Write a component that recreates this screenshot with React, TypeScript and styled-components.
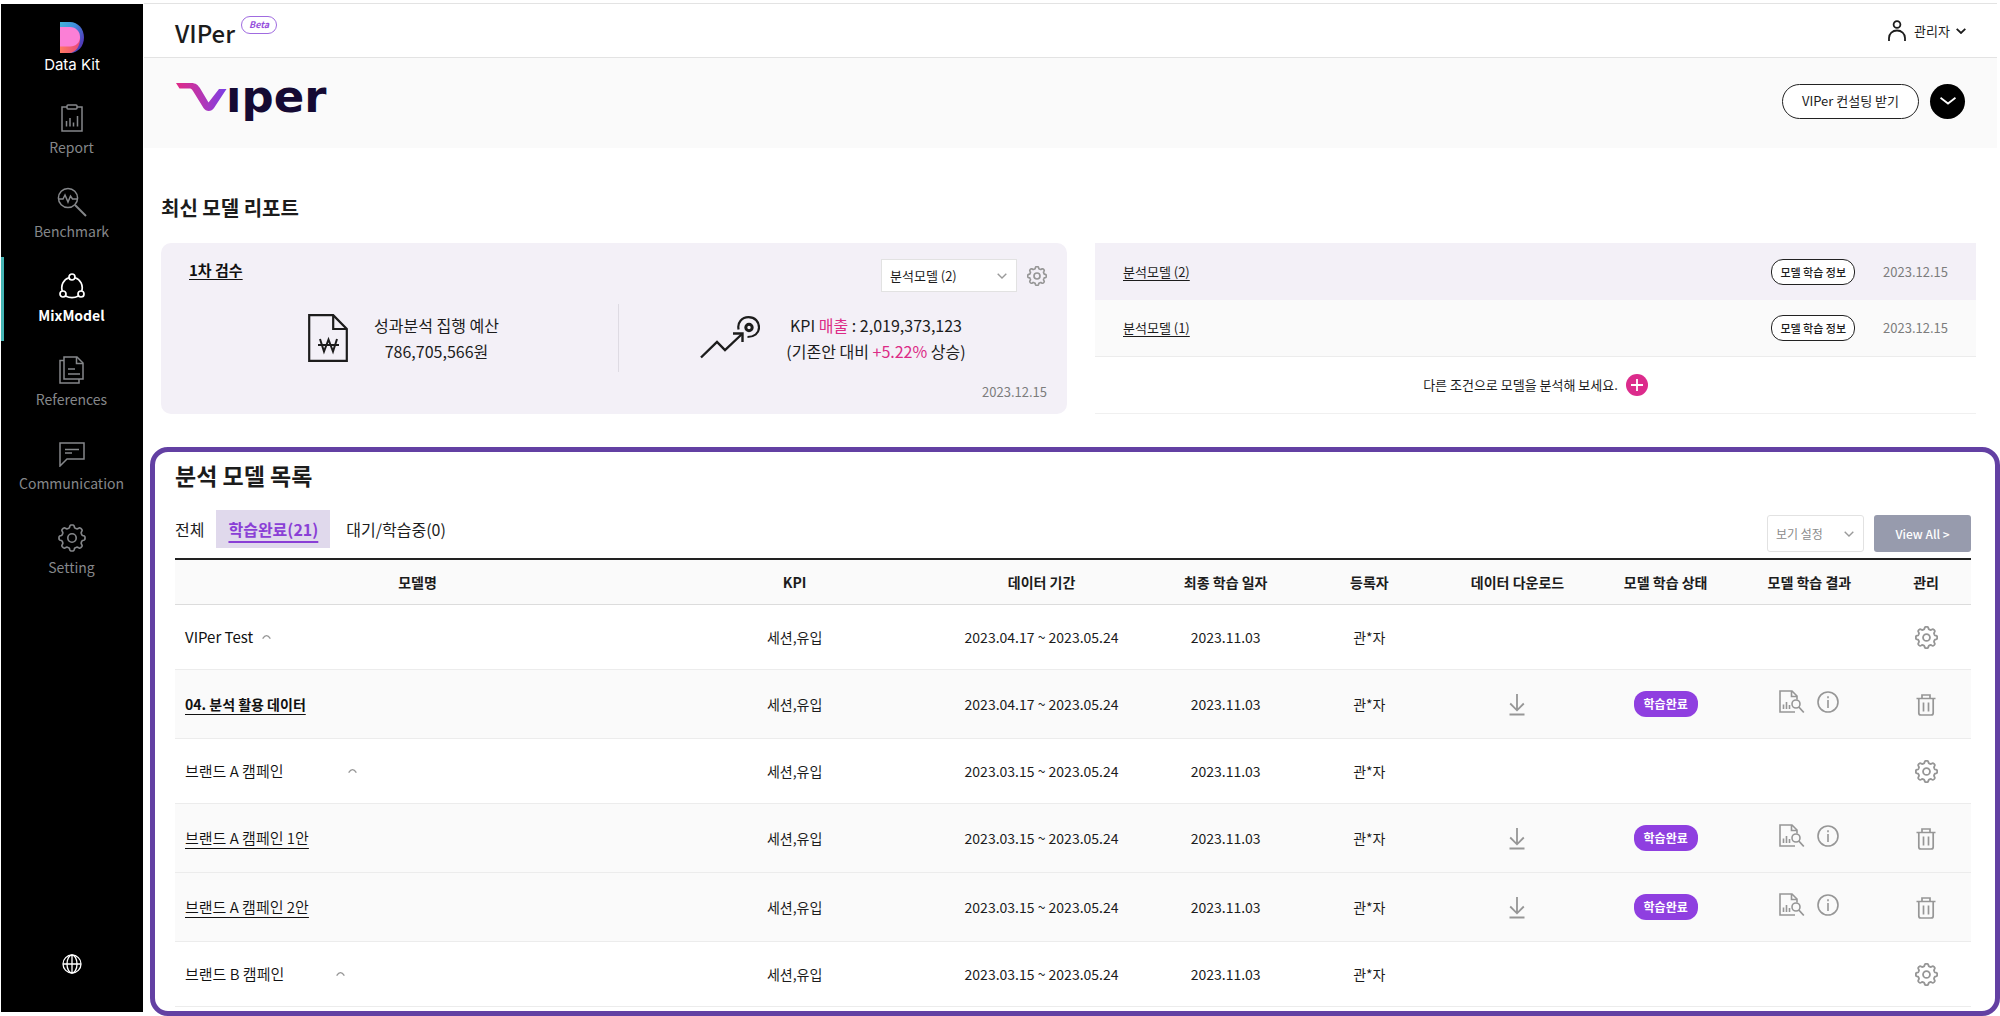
import React from "react";
import styled, { createGlobalStyle, css } from "styled-components";

const Global = createGlobalStyle`
  *, *::before, *::after { box-sizing: border-box; }
  body {
    margin: 0;
    background: #fff;
    color: #1c1c1c;
    font-family: "Noto Sans CJK KR", "Noto Sans", sans-serif;
    font-size: 14px;
    line-height: 20px;
  }
  button, select { font: inherit; color: inherit; }
  button { border: 0; padding: 0; background: none; cursor: pointer; }
  a { color: inherit; }
  svg { display: block; flex: none; }
  h1, h2, p { margin: 0; }
`;

/* ---------- icons ---------- */

const gearPath = (() => {
  const points: string[] = [];
  for (let i = 0; i < 160; i++) {
    const a = (i / 160) * Math.PI * 2;
    const r = 10 + 1.2 * Math.tanh(2.2 * Math.cos(8 * a));
    points.push(`${(12 + r * Math.sin(a)).toFixed(2)} ${(12 - r * Math.cos(a)).toFixed(2)}`);
  }
  return `M${points.join("L")}Z`;
})();

const GearIcon = ({ size = 24, stroke = 1.6 }: { size?: number; stroke?: number }) => (
  <svg width={size} height={size} viewBox="0 0 24 24" fill="none" stroke="currentColor" strokeWidth={stroke} strokeLinejoin="round">
    <path d={gearPath} />
    <circle cx="12" cy="12" r="3.6" />
  </svg>
);

const ReportIcon = () => (
  <svg width="22" height="28" viewBox="0 0 22 28" fill="none" stroke="currentColor" strokeWidth="1.5">
    <path d="M6 3H1v24h20V3h-5" />
    <rect x="6" y="1" width="10" height="4" rx="1" />
    <path d="M5.5 17v5.500M9 14v8.500M12.500 18.500v4M16.500 12v10.500" />
  </svg>
);

const BenchmarkIcon = () => (
  <svg width="30" height="30" viewBox="0 0 30 30" fill="none" stroke="currentColor" strokeWidth="1.5">
    <circle cx="11" cy="11" r="9.600" />
    <path d="M18 18l11 11" strokeWidth="2" />
    <path d="M2 12h4l2-4 3 7 2.500-6 2 3H20" />
  </svg>
);

const MixModelIcon = () => (
  <svg width="26" height="26" viewBox="0 0 26 26" fill="none" stroke="currentColor" strokeWidth="1.700">
    <circle cx="13" cy="4" r="3" />
    <circle cx="4" cy="21" r="3" />
    <circle cx="22" cy="21" r="3" />
    <path d="M10 4.800C4.500 6.500 1.500 12.500 3.300 18M16 4.800C21.500 6.500 24.500 12.500 22.700 18M6.500 23c4 2 9 2 13 0" />
  </svg>
);

const ReferencesIcon = () => (
  <svg width="26" height="28" viewBox="0 0 26 28" fill="none" stroke="currentColor" strokeWidth="1.500">
    <path d="M5 1h13l6 6v16H5z" />
    <path d="M17.500 1v6.500H24M5 4.500H1V27h19v-4M9 13h7M9 18h12" />
  </svg>
);

const CommunicationIcon = () => (
  <svg width="26" height="25" viewBox="0 0 26 25" fill="none" stroke="currentColor" strokeWidth="1.500">
    <path d="M1 1h24v16H8l-7 7z" />
    <path d="M6 7.500h14M6 11h7" />
  </svg>
);

const GlobeIcon = () => (
  <svg width="20" height="20" viewBox="0 0 20 20" fill="none" stroke="currentColor" strokeWidth="1.300">
    <circle cx="10" cy="10" r="9" />
    <ellipse cx="10" cy="10" rx="5" ry="9" />
    <path d="M10 1v18M1 10h18" />
  </svg>
);

const UserIcon = () => (
  <svg width="18" height="21" viewBox="0 0 18 21" fill="none" stroke="currentColor" strokeWidth="1.800">
    <circle cx="9" cy="4.500" r="3.400" />
    <path d="M1 21v-3c0-4.500 3.500-7.500 8-7.500s8 3 8 7.500v3" />
  </svg>
);

const Chevron = ({ width = 10, stroke = 1.4, up = false }: { width?: number; stroke?: number; up?: boolean }) => (
  <svg width={width} height={width * 0.6} viewBox="0 0 10 6" fill="none" stroke="currentColor" strokeWidth={stroke}>
    <path d={up ? "M.7 5.200Q5-1.800 9.300 5.200" : "M.7.800L5 5 9.300.800"} />
  </svg>
);

const WideChevron = () => (
  <svg width="16" height="8" viewBox="0 0 16 8" fill="none" stroke="currentColor" strokeWidth="1.800">
    <path d="M.5.800L8 6.500 15.500.800" />
  </svg>
);

const WonDocIcon = () => (
  <svg width="40" height="48" viewBox="0 0 40 48" fill="none" stroke="#1c1c1c" strokeWidth="2.200">
    <path d="M1.200 1.200h24L38.800 15v31.800H1.200z" />
    <path d="M25.200 1.200V15h13.600" />
    <path d="M12 25l4 12.500 4.500-12 4.500 12L29 25M10 31h21" strokeWidth="2" />
  </svg>
);

const TargetIcon = () => (
  <svg width="60" height="43" viewBox="0 0 60 43" fill="none" stroke="#1c1c1c" strokeWidth="2.400">
    <path d="M1 41.500l16-15.500 8 8L42 18" />
    <path d="M33 17.500h9.500V26" />
    <circle cx="49" cy="11.500" r="3.200" strokeWidth="3" />
    <path d="M38.600 13.500C37 6.500 42 1.200 48.500 1.200S59 5.500 59 11.500 54 21 47.500 21" strokeWidth="2.200" />
  </svg>
);

const DownloadIcon = () => (
  <svg width="16" height="22" viewBox="0 0 16 22" fill="none" stroke="currentColor" strokeWidth="1.800">
    <path d="M8 0v16M1.200 9.500L8 16.300l6.800-6.800M.5 20.500h15" />
  </svg>
);

const ReportSearchIcon = () => (
  <svg width="26" height="24" viewBox="0 0 26 24" fill="none" stroke="currentColor" strokeWidth="1.600">
    <path d="M16 22H1V1h12l5 5v3.500M12.500 1v5.500H18M4.500 14.500V19M7.500 12v7M10.500 15v4" />
    <circle cx="17" cy="14" r="4" />
    <path d="M19.800 17l5 5.500" strokeWidth="1.800" />
  </svg>
);

const InfoIcon = () => (
  <svg width="22" height="22" viewBox="0 0 22 22" fill="none" stroke="currentColor" strokeWidth="1.600">
    <circle cx="11" cy="11" r="10" />
    <path d="M11 9v8M11 5.200v2" />
  </svg>
);

const TrashIcon = () => (
  <svg width="20" height="22" viewBox="0 0 20 22" fill="none" stroke="currentColor" strokeWidth="1.700">
    <path d="M.5 4.500h19M6 4.500V1h8v3.500M2.800 4.500V19q0 2 2 2h10.400q2 0 2-2V4.500M7.500 8.500v9M12.500 8.500v9" />
  </svg>
);

const DataKitMark = () => (
  <svg width="24" height="31" viewBox="0 0 24 31">
    <defs>
      <linearGradient id="dk-blue" x1="0" y1="0" x2="1" y2=".6">
        <stop offset="0" stopColor="#43b4d8" />
        <stop offset=".5" stopColor="#3f8fdc" />
        <stop offset="1" stopColor="#5138b8" />
      </linearGradient>
      <linearGradient id="dk-red" x1="0" y1="0" x2="1" y2="0">
        <stop offset="0" stopColor="#ff7a62" />
        <stop offset="1" stopColor="#e8467c" />
      </linearGradient>
    </defs>
    <path d="M0 0h10c8 0 14 7 14 15.500S18 31 10 31H0z" fill="url(#dk-blue)" />
    <path d="M0 14h20c1 9-4 17-11 17H0z" fill="url(#dk-red)" />
    <path d="M0 5h10c6 0 10 4.500 10 10s-4 9.500-10 9.500H0z" fill="#fb7fd6" />
  </svg>
);

const LogoSvg = styled.svg`
  overflow: visible;
`;

const ViperLogo = () => (
  <LogoSvg width="160" height="46" viewBox="0 0 160 46" role="img" aria-label="viper">
    <defs>
      <linearGradient id="viper-v" x1="0" y1="0" x2="1" y2="0">
        <stop offset="0" stopColor="#e02a86" />
        <stop offset=".5" stopColor="#b636b4" />
        <stop offset="1" stopColor="#7a3fe6" />
      </linearGradient>
    </defs>
    <path
      d="M0 5h15c5 0 7 2 9.500 6l8 13.500L43 11h7.500L38 30c-2.500 4-8 4-10.500 0L17 13c-1.200-2-2-2.500-4-2.500H3.500z"
      fill="url(#viper-v)"
    />
    <text x="50" y="34" fontFamily="DejaVu Sans" fontWeight="700" fontSize="45" fill="#150a33">
      ıper
    </text>
  </LogoSvg>
);

/* ---------- shell ---------- */

const Shell = styled.div`
  display: flex;
  min-height: 100vh;
  padding-top: 3px;
`;

const Sidebar = styled.aside`
  display: flex;
  flex-direction: column;
  align-items: center;
  flex: 0 0 142px;
  margin: 1px 0 4px 1px;
  padding: 18px 0 38px;
  background: #000;
  color: #fff;
`;

const Brand = styled.div`
  display: flex;
  flex-direction: column;
  align-items: center;
  gap: 2px;
  margin-bottom: 14px;
  font-family: Inter, sans-serif;
  font-size: 15px;
`;

const Nav = styled.nav`
  align-self: stretch;
  flex: 1;
`;

const NavItem = styled.a<{ $active?: boolean }>`
  display: flex;
  flex-direction: column;
  align-items: center;
  gap: 4px;
  height: 84px;
  padding-top: 14px;
  border-left: 3px solid ${(p) => (p.$active ? "#45b5b5" : "transparent")};
  padding-right: 4px;
  color: ${(p) => (p.$active ? "#fff" : "#85878a")};
  font-weight: ${(p) => (p.$active ? 700 : 400)};
  font-size: 14px;
  text-decoration: none;
`;

const NavGlyph = styled.span`
  display: grid;
  place-items: center;
  height: 30px;
`;

const Main = styled.div`
  display: flex;
  flex-direction: column;
  flex: 1;
  min-width: 0;
  padding-left: 1px;
`;

const TopBar = styled.header`
  display: flex;
  align-items: center;
  justify-content: space-between;
  height: 55px;
  margin-right: 3px;
  padding: 0 31px;
  border: solid #e3e3e3;
  border-width: 1px 0;
`;

const TitleGroup = styled.div`
  display: flex;
  align-items: flex-start;
  gap: 6px;
  padding-top: 4px;
`;

const PageTitle = styled.h1`
  font-weight: 500;
  font-size: 24px;
  line-height: 34px;
`;

const BetaTag = styled.span`
  padding: 0 7px;
  border: 1px solid #a06be0;
  border-radius: 9px;
  color: #9650dc;
  font-style: italic;
  font-weight: 700;
  font-size: 9px;
  line-height: 16px;
`;

const UserMenu = styled.button`
  display: flex;
  align-items: center;
  gap: 6px;
  font-size: 13px;

  svg:first-child { margin-right: 2px; }
`;

const Banner = styled.section`
  display: flex;
  align-items: center;
  justify-content: space-between;
  height: 90px;
  margin-right: 3px;
  padding: 0 32px 4px;
  background: #fafafa;
`;

const BannerActions = styled.div`
  display: flex;
  gap: 11px;
`;

const OutlineButton = styled.button<{ $small?: boolean }>`
  border: 1px solid #222;
  background: #fff;
  ${(p) =>
    p.$small
      ? css`
          height: 26px;
          padding: 0 8px;
          border-radius: 12px;
          font-size: 11px;
          font-weight: 500;
        `
      : css`
          height: 35px;
          padding: 0 19px;
          border-radius: 18px;
          font-size: 13px;
        `}
`;

const RoundButton = styled.button`
  display: grid;
  place-items: center;
  width: 35px;
  height: 35px;
  border-radius: 50%;
  background: #000;
  color: #fff;
`;

/* ---------- latest report ---------- */

const Latest = styled.section`
  padding: 45px 24px 33px 17px;
`;

const SectionTitle = styled.h2`
  margin-bottom: 20px;
  font-weight: 700;
  font-size: 20px;
  line-height: 30px;
`;

const LatestGrid = styled.div`
  display: grid;
  grid-template-columns: 906fr 881fr;
  gap: 28px;
`;

const Card = styled.article`
  display: flex;
  flex-direction: column;
  padding: 16px 20px 10px 28px;
  border-radius: 10px;
  background: #f3f0f7;
`;

const CardHead = styled.div`
  display: flex;
  align-items: center;
  gap: 10px;
  margin-bottom: 12px;
  color: #9a9a9a;
`;

const CardTitle = styled.a`
  margin-right: auto;
  padding-bottom: 12px;
  color: #111;
  font-weight: 700;
  font-size: 15px;
  text-underline-offset: 3px;
`;

const SelectBox = styled.span<{ $kind: "model" | "view" }>`
  position: relative;
  display: flex;

  select {
    appearance: none;
    border: 1px solid #e2e2e2;
    background: #fff;
    padding: 0 8px;
    ${(p) =>
      p.$kind === "model"
        ? css`
            width: 136px;
            height: 33px;
            color: #1c1c1c;
            font-size: 13px;
          `
        : css`
            width: 97px;
            height: 37px;
            border-radius: 3px;
            color: #8c8c8c;
            font-size: 12px;
          `}
  }

  svg {
    position: absolute;
    top: 50%;
    right: 10px;
    margin-top: -3px;
    color: #9a9a9a;
    pointer-events: none;
  }
`;

const IconButton = styled.button`
  display: inline-grid;
  place-items: center;
  vertical-align: middle;
  color: #969696;
`;

const Stats = styled.div`
  display: grid;
  grid-template-columns: 1fr 1fr;
  height: 68px;
  margin-bottom: 10px;
`;

const Stat = styled.div`
  display: flex;
  align-items: center;
  justify-content: center;
  gap: 26px;
  padding-bottom: 1px;
  font-size: 16px;
  line-height: 26px;
  text-align: center;

  & + & { border-left: 1px solid #dedbe3; }
`;

const Accent = styled.span`
  color: #dc2b86;
`;

const DateText = styled.time`
  color: #7c7c7c;
  font-size: 13px;
`;

const CardDate = styled(DateText)`
  align-self: flex-end;
`;

const ModelRow = styled.div<{ $tone: string }>`
  display: flex;
  align-items: center;
  gap: 28px;
  height: 57px;
  padding: 0 28px;
  background: ${(p) => p.$tone};
  font-size: 13px;

  a { margin-right: auto; text-underline-offset: 3px; }
  & + & { border-bottom: 1px solid #ececec; }
`;

const NewModelRow = styled.div`
  display: flex;
  align-items: center;
  justify-content: center;
  gap: 8px;
  height: 57px;
  border-bottom: 1px solid #f0f0f0;
  font-size: 13px;
`;

const AddButton = styled.button`
  display: grid;
  place-items: center;
  width: 22px;
  height: 22px;
  border-radius: 50%;
  background: #dc2b8c;
`;

/* ---------- model list ---------- */

const Panel = styled.section`
  flex: 1;
  margin-left: 6px;
  padding: 6px 24px 3px 20px;
  border: 5px solid #6340a3;
  border-radius: 18px;
`;

const PanelTitle = styled.h2`
  margin-bottom: 18px;
  font-weight: 700;
  font-size: 23px;
  line-height: 34px;
`;

const ToolRow = styled.div`
  display: flex;
  align-items: flex-end;
  gap: 10px;
  height: 42px;
  margin-bottom: 6px;
`;

const Tabs = styled.div`
  display: flex;
  align-self: flex-start;
  margin-right: auto;
`;

const Tab = styled.button<{ $active?: boolean }>`
  height: 38px;
  padding: 0 ${(p) => (p.$active ? 12 : 16)}px;
  font-size: 16px;

  &:first-child { padding: 0 12px 0 0; }
  ${(p) =>
    p.$active &&
    css`
      background: #e0d9ec;
      color: #8a3fd6;
      font-weight: 700;
      text-decoration: underline;
      text-decoration-thickness: 2px;
      text-underline-offset: 5px;
    `}
`;

const ViewAll = styled.button`
  width: 97px;
  height: 37px;
  border-radius: 3px;
  background: #979bad;
  color: #fff;
  font-weight: 500;
  font-size: 12px;
`;

const Table = styled.table`
  width: 100%;
  table-layout: fixed;
  border-collapse: separate;
  border-spacing: 0;
  border-top: 2px solid #222;
  text-align: center;

  th {
    height: 45px;
    padding: 0;
    border-bottom: 1px solid #dcdcdc;
    background: #fafafa;
    font-weight: 700;
  }
`;

const Row = styled.tr<{ $child?: boolean }>`
  td {
    height: ${(p) => (p.$child ? 69 : 65)}px;
    padding: 0;
    border-bottom: 1px solid #ececec;
    background: ${(p) => (p.$child ? "#fafafa" : "#fff")};
  }
  td:first-child { padding-left: 10px; text-align: left; }
`;

const GroupName = styled.div<{ $light?: boolean }>`
  display: flex;
  align-items: center;
  gap: 9px;
  color: #111;
  font-weight: ${(p) => (p.$light ? 350 : 400)};
  font-size: 15px;
`;

const NameText = styled.span<{ $width?: number }>`
  min-width: ${(p) => p.$width ?? 0}px;
`;

const ModelLink = styled.a<{ $light?: boolean }>`
  color: #111;
  font-weight: ${(p) => (p.$light ? 350 : 700)};
  font-size: ${(p) => (p.$light ? 15 : 14)}px;
  text-underline-offset: 4px;
`;

const Status = styled.span`
  display: inline-block;
  padding: 0 10px;
  border-radius: 12px;
  background: #8f3fe0;
  color: #fff;
  font-weight: 700;
  font-size: 12px;
  line-height: 26px;
`;

const ResultIcons = styled.span`
  display: flex;
  justify-content: center;
  align-items: center;
  gap: 12px;
  padding-bottom: 4px;
`;

/* ---------- data ---------- */

const navItems = [
  { label: "Report", icon: <ReportIcon /> },
  { label: "Benchmark", icon: <BenchmarkIcon /> },
  { label: "MixModel", icon: <MixModelIcon />, active: true },
  { label: "References", icon: <ReferencesIcon /> },
  { label: "Communication", icon: <CommunicationIcon /> },
  { label: "Setting", icon: <GearIcon size={28} stroke={1.4} /> },
];

const columns: [string, string][] = [
  ["모델명", "27%"],
  ["KPI", "15%"],
  ["데이터 기간", "12.5%"],
  ["최종 학습 일자", "8%"],
  ["등록자", "8%"],
  ["데이터 다운로드", "8.5%"],
  ["모델 학습 상태", "8%"],
  ["모델 학습 결과", "8%"],
  ["관리", "5%"],
];

type Model = { name: string; start: string; child?: boolean; light?: boolean; nameWidth?: number };

const models: Model[] = [
  { name: "VIPer Test", start: "2023.04.17" },
  { name: "04. 분석 활용 데이터", start: "2023.04.17", child: true },
  { name: "브랜드 A 캠페인", start: "2023.03.15", light: true, nameWidth: 154 },
  { name: "브랜드 A 캠페인 1안", start: "2023.03.15", child: true, light: true },
  { name: "브랜드 A 캠페인 2안", start: "2023.03.15", child: true, light: true },
  { name: "브랜드 B 캠페인", start: "2023.03.15", light: true, nameWidth: 142 },
];

const ModelTableRow = ({ name, start, child, light, nameWidth }: Model) => (
  <Row $child={child}>
    <td>
      {child ? (
        <ModelLink href="#" $light={light}>{name}</ModelLink>
      ) : (
        <GroupName $light={light}>
          <NameText $width={nameWidth}>{name}</NameText>
          <IconButton aria-label="접기"><Chevron up width={9} /></IconButton>
        </GroupName>
      )}
    </td>
    <td>세션,유입</td>
    <td>{start} ~ 2023.05.24</td>
    <td>2023.11.03</td>
    <td>관*자</td>
    <td>{child && <IconButton aria-label="다운로드"><DownloadIcon /></IconButton>}</td>
    <td>{child && <Status>학습완료</Status>}</td>
    <td>
      {child && (
        <ResultIcons>
          <IconButton aria-label="결과 보기"><ReportSearchIcon /></IconButton>
          <IconButton aria-label="정보"><InfoIcon /></IconButton>
        </ResultIcons>
      )}
    </td>
    <td>
      {child ? (
        <IconButton aria-label="삭제"><TrashIcon /></IconButton>
      ) : (
        <IconButton aria-label="설정"><GearIcon size={23} stroke={1.9} /></IconButton>
      )}
    </td>
  </Row>
);

export default function App() {
  return (
    <>
      <Global />
      <Shell>
        <Sidebar>
          <Brand>
            <DataKitMark />
            Data Kit
          </Brand>
          <Nav>
            {navItems.map((item) => (
              <NavItem key={item.label} href="#" $active={item.active}>
                <NavGlyph>{item.icon}</NavGlyph>
                {item.label}
              </NavItem>
            ))}
          </Nav>
          <GlobeIcon />
        </Sidebar>

        <Main>
          <TopBar>
            <TitleGroup>
              <PageTitle>VIPer</PageTitle>
              <BetaTag>Beta</BetaTag>
            </TitleGroup>
            <UserMenu>
              <UserIcon />
              관리자
              <Chevron stroke={1.8} />
            </UserMenu>
          </TopBar>

          <Banner>
            <ViperLogo />
            <BannerActions>
              <OutlineButton>VIPer 컨설팅 받기</OutlineButton>
              <RoundButton aria-label="펼치기"><WideChevron /></RoundButton>
            </BannerActions>
          </Banner>

          <Latest>
            <SectionTitle>최신 모델 리포트</SectionTitle>
            <LatestGrid>
              <Card>
                <CardHead>
                  <CardTitle href="#">1차 검수</CardTitle>
                  <SelectBox $kind="model">
                    <select aria-label="분석모델">
                      <option>분석모델 (2)</option>
                      <option>분석모델 (1)</option>
                    </select>
                    <Chevron />
                  </SelectBox>
                  <IconButton aria-label="설정"><GearIcon size={20} stroke={2} /></IconButton>
                </CardHead>
                <Stats>
                  <Stat>
                    <WonDocIcon />
                    <p>
                      성과분석 집행 예산
                      <br />
                      786,705,566원
                    </p>
                  </Stat>
                  <Stat>
                    <TargetIcon />
                    <p>
                      KPI <Accent>매출</Accent> : 2,019,373,123
                      <br />
                      (기존안 대비 <Accent>+5.22%</Accent> 상승)
                    </p>
                  </Stat>
                </Stats>
                <CardDate>2023.12.15</CardDate>
              </Card>

              <div>
                <ModelRow $tone="#f3f0f7">
                  <a href="#">분석모델 (2)</a>
                  <OutlineButton $small>모델 학습 정보</OutlineButton>
                  <DateText>2023.12.15</DateText>
                </ModelRow>
                <ModelRow $tone="#fafafa">
                  <a href="#">분석모델 (1)</a>
                  <OutlineButton $small>모델 학습 정보</OutlineButton>
                  <DateText>2023.12.15</DateText>
                </ModelRow>
                <NewModelRow>
                  다른 조건으로 모델을 분석해 보세요.
                  <AddButton aria-label="모델 추가">
                    <svg width="12" height="12" viewBox="0 0 12 12" stroke="#fff" strokeWidth="1.800">
                      <path d="M6 0v12M0 6h12" />
                    </svg>
                  </AddButton>
                </NewModelRow>
              </div>
            </LatestGrid>
          </Latest>

          <Panel>
            <PanelTitle>분석 모델 목록</PanelTitle>
            <ToolRow>
              <Tabs>
                <Tab>전체</Tab>
                <Tab $active>학습완료(21)</Tab>
                <Tab>대기/학습중(0)</Tab>
              </Tabs>
              <SelectBox $kind="view">
                <select aria-label="보기 설정">
                  <option>보기 설정</option>
                </select>
                <Chevron />
              </SelectBox>
              <ViewAll>View All &gt;</ViewAll>
            </ToolRow>
            <Table>
              <colgroup>
                {columns.map(([label, width]) => (
                  <col key={label} width={width} />
                ))}
              </colgroup>
              <thead>
                <tr>
                  {columns.map(([label]) => (
                    <th key={label} scope="col">{label}</th>
                  ))}
                </tr>
              </thead>
              <tbody>
                {models.map((m) => (
                  <ModelTableRow key={m.name} {...m} />
                ))}
              </tbody>
            </Table>
          </Panel>
        </Main>
      </Shell>
    </>
  );
}
